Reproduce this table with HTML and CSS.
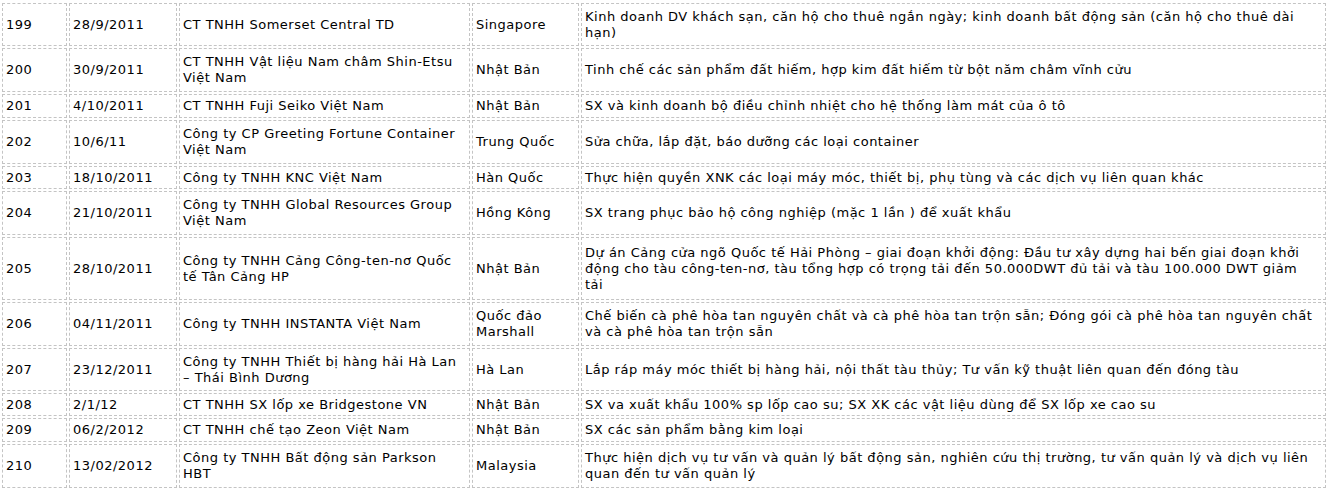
FILE: index.html
```html
<!DOCTYPE html>
<html lang="vi">
<head>
<meta charset="utf-8">
<link rel="stylesheet" href="styles.css">
</head>
<body>
<table class="list">
<colgroup>
<col class="c-no"><col class="c-date"><col class="c-name"><col class="c-country"><col class="c-desc">
</colgroup>
<tbody>
<tr class="h2"><td>199</td><td>28/9/2011</td><td>CT TNHH Somerset Central TD</td><td>Singapore</td><td class="desc">Kinh doanh DV khách sạn, căn hộ cho thuê ngắn ngày; kinh doanh bất động sản (căn hộ cho thuê dài hạn)</td></tr>
<tr class="h2b"><td>200</td><td>30/9/2011</td><td>CT TNHH Vật liệu Nam châm Shin-Etsu Việt Nam</td><td>Nhật Bản</td><td class="desc">Tinh chế các sản phẩm đất hiếm, hợp kim đất hiếm từ bột năm châm vĩnh cửu</td></tr>
<tr class="h1b"><td>201</td><td>4/10/2011</td><td>CT TNHH Fuji Seiko Việt Nam</td><td>Nhật Bản</td><td class="desc">SX và kinh doanh bộ điều chỉnh nhiệt cho hệ thống làm mát của ô tô</td></tr>
<tr class="h2b"><td>202</td><td>10/6/11</td><td>Công ty CP Greeting Fortune Container Việt Nam</td><td>Trung Quốc</td><td class="desc">Sửa chữa, lắp đặt, báo dưỡng các loại container</td></tr>
<tr class="h1"><td>203</td><td>18/10/2011</td><td>Công ty TNHH KNC Việt Nam</td><td>Hàn Quốc</td><td class="desc">Thực hiện quyền XNK các loại máy móc, thiết bị, phụ tùng và các dịch vụ liên quan khác</td></tr>
<tr class="h2b"><td>204</td><td>21/10/2011</td><td>Công ty TNHH Global Resources Group Việt Nam</td><td>Hồng Kông</td><td class="desc">SX trang phục bảo hộ công nghiệp (mặc 1 lần ) để xuất khẩu</td></tr>
<tr class="h3"><td>205</td><td>28/10/2011</td><td>Công ty TNHH Cảng Công-ten-nơ Quốc tế Tân Cảng HP</td><td>Nhật Bản</td><td class="desc">Dự án Cảng cửa ngõ Quốc tế Hải Phòng – giai đoạn khởi động: Đầu tư xây dựng hai bến giai đoạn khởi động cho tàu công-ten-nơ, tàu tổng hợp có trọng tải đến 50.000DWT đủ tải và tàu 100.000 DWT giảm tải</td></tr>
<tr class="h2b"><td>206</td><td>04/11/2011</td><td>Công ty TNHH INSTANTA Việt Nam</td><td>Quốc đảo Marshall</td><td class="desc">Chế biến cà phê hòa tan nguyên chất và cà phê hòa tan trộn sẵn; Đóng gói cà phê hòa tan nguyên chất và cà phê hòa tan trộn sẵn</td></tr>
<tr class="h2"><td>207</td><td>23/12/2011</td><td>Công ty TNHH Thiết bị hàng hải Hà Lan – Thái Bình Dương</td><td>Hà Lan</td><td class="desc">Lắp ráp máy móc thiết bị hàng hải, nội thất tàu thủy; Tư vấn kỹ thuật liên quan đến đóng tàu</td></tr>
<tr class="h1"><td>208</td><td>2/1/12</td><td>CT TNHH SX lốp xe Bridgestone VN</td><td>Nhật Bản</td><td class="desc">SX va xuất khẩu 100% sp lốp cao su; SX XK các vật liệu dùng để SX lốp xe cao su</td></tr>
<tr class="h1b"><td>209</td><td>06/2/2012</td><td>CT TNHH chế tạo Zeon Việt Nam</td><td>Nhật Bản</td><td class="desc">SX các sản phẩm bằng kim loại</td></tr>
<tr class="h2b"><td>210</td><td>13/02/2012</td><td>Công ty TNHH Bất động sản Parkson HBT</td><td>Malaysia</td><td class="desc">Thực hiện dịch vụ tư vấn và quản lý bất động sản, nghiên cứu thị trường, tư vấn quản lý và dịch vụ liên quan đến tư vấn quản lý</td></tr>
</tbody>
</table>
</body>
</html>
```

FILE: styles.css
```css
html, body {
  margin: 0;
  padding: 0;
  background: #ffffff;
}

body {
  padding: 1px 0 0 0;
  font-family: "DejaVu Sans", Verdana, sans-serif;
  font-size: 13px;
  letter-spacing: 0.5px;
  color: #000000;
}

.list {
  width: 1328px;
  table-layout: fixed;
  border-collapse: separate;
  border-spacing: 2px;
  margin: 0;
}

.list td {
  border: 1px dashed #c4c4c4;
  padding: 1px 3px;
  line-height: 16px;
  vertical-align: middle;
  text-align: left;
  overflow: hidden;
}

.list td.desc {
  padding-right: 8px;
}

.c-no { width: 65px; }
.c-date { width: 108px; }
.c-name { width: 291px; }
.c-country { width: 107px; }
.c-desc { width: auto; }

.h1 { height: 23px; }
.h1b { height: 24px; }
.h2 { height: 43px; }
.h2b { height: 44px; }
.h3 { height: 63px; }
```
